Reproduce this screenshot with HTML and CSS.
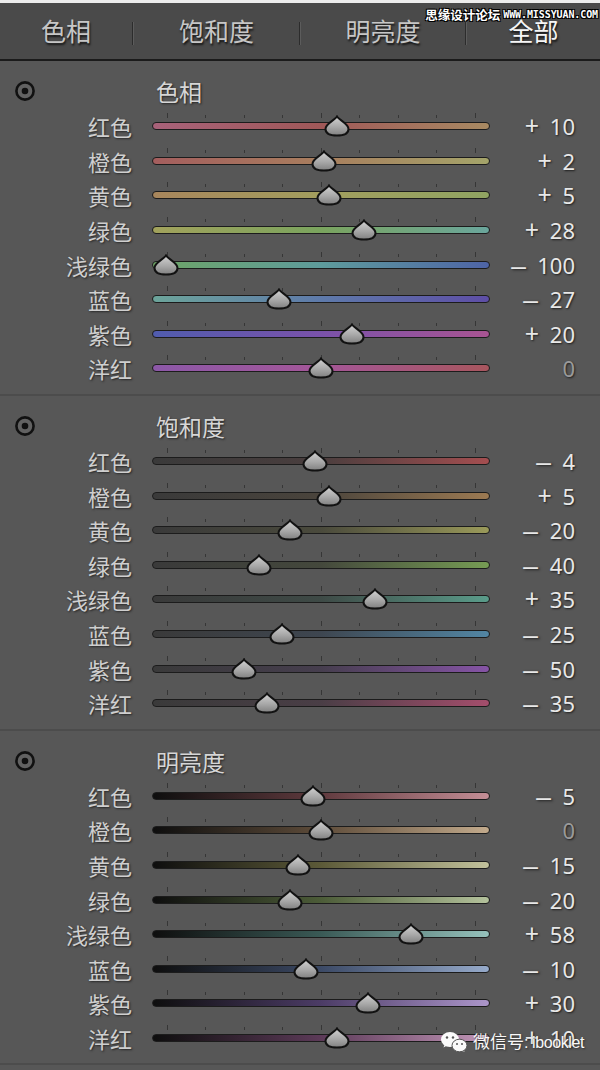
FILE: index.html
```html
<!DOCTYPE html>
<html>
<head>
<meta charset="utf-8">
<link rel="stylesheet" href="styles.css">
</head>
<body>
<svg class="defs" width="0" height="0">
  <defs>
    <linearGradient id="tg" x1="0" y1="0" x2="0" y2="1">
      <stop offset="0" stop-color="#d2d2d2"/>
      <stop offset="0.55" stop-color="#a8a8a8"/>
      <stop offset="1" stop-color="#808080"/>
    </linearGradient>
    <symbol id="thumb" viewBox="0 0 26 22">
      <path d="M13 1.5 C15 5 24.5 8.5 24.5 14 C24.5 18.5 20 20.5 13 20.5 C6 20.5 1.5 18.5 1.5 14 C1.5 8.5 11 5 13 1.5 Z" fill="url(#tg)" stroke="#121212" stroke-width="2"/>
    </symbol>
    <symbol id="eye" viewBox="0 0 22 22">
      <circle cx="11" cy="11" r="8.6" fill="#626262" stroke="#111" stroke-width="2.6"/>
      <circle cx="11" cy="11" r="3.3" fill="#111"/>
    </symbol>
  </defs>
</svg>
<div class="page">
  <div class="topstrip"></div>
  <div class="header">
    <div class="tab t1">色相</div>
    <div class="sep"></div>
    <div class="tab t2">饱和度</div>
    <div class="sep"></div>
    <div class="tab t3">明亮度</div>
    <div class="sep"></div>
    <div class="tab t4 active">全部</div>
  </div>

  <div class="section">
    <div class="row title-row">
      <div class="eye"><svg width="22" height="22"><use href="#eye"/></svg></div>
      <div class="title">色相</div>
    </div>
    <div class="row"><div class="label">红色</div><div class="track"><div class="bar h-red"></div><div class="ticks"><i class="big"></i><i></i><i></i><i></i><i class="big"></i><i></i><i></i><i></i><i class="big"></i></div><svg class="thumb" style="left:184.5px" width="26" height="22"><use href="#thumb"/></svg></div><div class="value"><span class="plus">+</span> 10</div></div>
    <div class="row"><div class="label">橙色</div><div class="track"><div class="bar h-orange"></div><div class="ticks"><i class="big"></i><i></i><i></i><i></i><i class="big"></i><i></i><i></i><i></i><i class="big"></i></div><svg class="thumb" style="left:172.1px" width="26" height="22"><use href="#thumb"/></svg></div><div class="value"><span class="plus">+</span> 2</div></div>
    <div class="row"><div class="label">黄色</div><div class="track"><div class="bar h-yellow"></div><div class="ticks"><i class="big"></i><i></i><i></i><i></i><i class="big"></i><i></i><i></i><i></i><i class="big"></i></div><svg class="thumb" style="left:176.75px" width="26" height="22"><use href="#thumb"/></svg></div><div class="value"><span class="plus">+</span> 5</div></div>
    <div class="row"><div class="label">绿色</div><div class="track"><div class="bar h-green"></div><div class="ticks"><i class="big"></i><i></i><i></i><i></i><i class="big"></i><i></i><i></i><i></i><i class="big"></i></div><svg class="thumb" style="left:212.4px" width="26" height="22"><use href="#thumb"/></svg></div><div class="value"><span class="plus">+</span> 28</div></div>
    <div class="row"><div class="label">浅绿色</div><div class="track"><div class="bar h-aqua"></div><div class="ticks"><i class="big"></i><i></i><i></i><i></i><i class="big"></i><i></i><i></i><i></i><i class="big"></i></div><svg class="thumb" style="left:14px" width="26" height="22"><use href="#thumb"/></svg></div><div class="value"><span class="minus">–</span> 100</div></div>
    <div class="row"><div class="label">蓝色</div><div class="track"><div class="bar h-blue"></div><div class="ticks"><i class="big"></i><i></i><i></i><i></i><i class="big"></i><i></i><i></i><i></i><i class="big"></i></div><svg class="thumb" style="left:127.15px" width="26" height="22"><use href="#thumb"/></svg></div><div class="value"><span class="minus">–</span> 27</div></div>
    <div class="row"><div class="label">紫色</div><div class="track"><div class="bar h-purple"></div><div class="ticks"><i class="big"></i><i></i><i></i><i></i><i class="big"></i><i></i><i></i><i></i><i class="big"></i></div><svg class="thumb" style="left:200px" width="26" height="22"><use href="#thumb"/></svg></div><div class="value"><span class="plus">+</span> 20</div></div>
    <div class="row"><div class="label">洋红</div><div class="track"><div class="bar h-magenta"></div><div class="ticks"><i class="big"></i><i></i><i></i><i></i><i class="big"></i><i></i><i></i><i></i><i class="big"></i></div><svg class="thumb" style="left:169px" width="26" height="22"><use href="#thumb"/></svg></div><div class="value zero">0</div></div>
  </div>

  <div class="section">
    <div class="row title-row">
      <div class="eye"><svg width="22" height="22"><use href="#eye"/></svg></div>
      <div class="title">饱和度</div>
    </div>
    <div class="row"><div class="label">红色</div><div class="track"><div class="bar s-red"></div><div class="ticks"><i class="big"></i><i></i><i></i><i></i><i class="big"></i><i></i><i></i><i></i><i class="big"></i></div><svg class="thumb" style="left:162.8px" width="26" height="22"><use href="#thumb"/></svg></div><div class="value"><span class="minus">–</span> 4</div></div>
    <div class="row"><div class="label">橙色</div><div class="track"><div class="bar s-orange"></div><div class="ticks"><i class="big"></i><i></i><i></i><i></i><i class="big"></i><i></i><i></i><i></i><i class="big"></i></div><svg class="thumb" style="left:176.75px" width="26" height="22"><use href="#thumb"/></svg></div><div class="value"><span class="plus">+</span> 5</div></div>
    <div class="row"><div class="label">黄色</div><div class="track"><div class="bar s-yellow"></div><div class="ticks"><i class="big"></i><i></i><i></i><i></i><i class="big"></i><i></i><i></i><i></i><i class="big"></i></div><svg class="thumb" style="left:138px" width="26" height="22"><use href="#thumb"/></svg></div><div class="value"><span class="minus">–</span> 20</div></div>
    <div class="row"><div class="label">绿色</div><div class="track"><div class="bar s-green"></div><div class="ticks"><i class="big"></i><i></i><i></i><i></i><i class="big"></i><i></i><i></i><i></i><i class="big"></i></div><svg class="thumb" style="left:107px" width="26" height="22"><use href="#thumb"/></svg></div><div class="value"><span class="minus">–</span> 40</div></div>
    <div class="row"><div class="label">浅绿色</div><div class="track"><div class="bar s-aqua"></div><div class="ticks"><i class="big"></i><i></i><i></i><i></i><i class="big"></i><i></i><i></i><i></i><i class="big"></i></div><svg class="thumb" style="left:223.25px" width="26" height="22"><use href="#thumb"/></svg></div><div class="value"><span class="plus">+</span> 35</div></div>
    <div class="row"><div class="label">蓝色</div><div class="track"><div class="bar s-blue"></div><div class="ticks"><i class="big"></i><i></i><i></i><i></i><i class="big"></i><i></i><i></i><i></i><i class="big"></i></div><svg class="thumb" style="left:130.25px" width="26" height="22"><use href="#thumb"/></svg></div><div class="value"><span class="minus">–</span> 25</div></div>
    <div class="row"><div class="label">紫色</div><div class="track"><div class="bar s-purple"></div><div class="ticks"><i class="big"></i><i></i><i></i><i></i><i class="big"></i><i></i><i></i><i></i><i class="big"></i></div><svg class="thumb" style="left:91.5px" width="26" height="22"><use href="#thumb"/></svg></div><div class="value"><span class="minus">–</span> 50</div></div>
    <div class="row"><div class="label">洋红</div><div class="track"><div class="bar s-magenta"></div><div class="ticks"><i class="big"></i><i></i><i></i><i></i><i class="big"></i><i></i><i></i><i></i><i class="big"></i></div><svg class="thumb" style="left:114.75px" width="26" height="22"><use href="#thumb"/></svg></div><div class="value"><span class="minus">–</span> 35</div></div>
  </div>

  <div class="section">
    <div class="row title-row">
      <div class="eye"><svg width="22" height="22"><use href="#eye"/></svg></div>
      <div class="title">明亮度</div>
    </div>
    <div class="row"><div class="label">红色</div><div class="track"><div class="bar l-red"></div><div class="ticks"><i class="big"></i><i></i><i></i><i></i><i class="big"></i><i></i><i></i><i></i><i class="big"></i></div><svg class="thumb" style="left:161.25px" width="26" height="22"><use href="#thumb"/></svg></div><div class="value"><span class="minus">–</span> 5</div></div>
    <div class="row"><div class="label">橙色</div><div class="track"><div class="bar l-orange"></div><div class="ticks"><i class="big"></i><i></i><i></i><i></i><i class="big"></i><i></i><i></i><i></i><i class="big"></i></div><svg class="thumb" style="left:169px" width="26" height="22"><use href="#thumb"/></svg></div><div class="value zero">0</div></div>
    <div class="row"><div class="label">黄色</div><div class="track"><div class="bar l-yellow"></div><div class="ticks"><i class="big"></i><i></i><i></i><i></i><i class="big"></i><i></i><i></i><i></i><i class="big"></i></div><svg class="thumb" style="left:145.75px" width="26" height="22"><use href="#thumb"/></svg></div><div class="value"><span class="minus">–</span> 15</div></div>
    <div class="row"><div class="label">绿色</div><div class="track"><div class="bar l-green"></div><div class="ticks"><i class="big"></i><i></i><i></i><i></i><i class="big"></i><i></i><i></i><i></i><i class="big"></i></div><svg class="thumb" style="left:138px" width="26" height="22"><use href="#thumb"/></svg></div><div class="value"><span class="minus">–</span> 20</div></div>
    <div class="row"><div class="label">浅绿色</div><div class="track"><div class="bar l-aqua"></div><div class="ticks"><i class="big"></i><i></i><i></i><i></i><i class="big"></i><i></i><i></i><i></i><i class="big"></i></div><svg class="thumb" style="left:258.9px" width="26" height="22"><use href="#thumb"/></svg></div><div class="value"><span class="plus">+</span> 58</div></div>
    <div class="row"><div class="label">蓝色</div><div class="track"><div class="bar l-blue"></div><div class="ticks"><i class="big"></i><i></i><i></i><i></i><i class="big"></i><i></i><i></i><i></i><i class="big"></i></div><svg class="thumb" style="left:153.5px" width="26" height="22"><use href="#thumb"/></svg></div><div class="value"><span class="minus">–</span> 10</div></div>
    <div class="row"><div class="label">紫色</div><div class="track"><div class="bar l-purple"></div><div class="ticks"><i class="big"></i><i></i><i></i><i></i><i class="big"></i><i></i><i></i><i></i><i class="big"></i></div><svg class="thumb" style="left:215.5px" width="26" height="22"><use href="#thumb"/></svg></div><div class="value"><span class="plus">+</span> 30</div></div>
    <div class="row"><div class="label">洋红</div><div class="track"><div class="bar l-magenta"></div><div class="ticks"><i class="big"></i><i></i><i></i><i></i><i class="big"></i><i></i><i></i><i></i><i class="big"></i></div><svg class="thumb" style="left:184.5px" width="26" height="22"><use href="#thumb"/></svg></div><div class="value"><span class="plus">+</span> 10</div></div>
  </div>

  <div class="wm-top"><span class="wm-cn">思缘设计论坛</span><span class="wm-en">WWW.MISSYUAN.COM</span></div>
  <div class="wm-bottom">
    <svg class="wechat" width="28" height="22" viewBox="0 0 28 22">
      <path d="M3.5 16.5 L5 12.5 L8 14 Z" fill="#fafafa"/>
      <ellipse cx="10" cy="8.5" rx="9" ry="7.5" fill="#fafafa"/>
      <circle cx="7" cy="6.5" r="1.2" fill="#555"/>
      <circle cx="13" cy="6.5" r="1.2" fill="#555"/>
      <path d="M24.5 21 L23.5 17.5 L21 19 Z" fill="#fafafa"/>
      <ellipse cx="19.5" cy="14.5" rx="7.5" ry="6.3" fill="#fafafa" stroke="#555" stroke-width="1"/>
      <circle cx="17" cy="13" r="1" fill="#555"/>
      <circle cx="22" cy="13" r="1" fill="#555"/>
    </svg>
    <span class="wm-text"><span class="wm-cn2">微信号</span><span class="wm-lat">: ibooklet</span></span>
  </div>
</div>
</body>
</html>
```

FILE: styles.css
```css
html, body {
  margin: 0;
  padding: 0;
}
body {
  background: #575757;
  font-family: "Noto Sans CJK SC", "Noto Sans", sans-serif;
  width: 600px;
  height: 1070px;
  overflow: hidden;
}
.defs {
  display: block;
  width: 0;
  height: 0;
  overflow: hidden;
}
.page {
  position: relative;
  width: 600px;
  height: 1070px;
  background: #575757;
}
.topstrip {
  height: 3px;
  background: #ededed;
}
.header {
  height: 56px;
  background: #4a4a4a;
  border-bottom: 2px solid #1b1b1b;
  display: flex;
  align-items: center;
}
.tab {
  text-align: center;
  font-size: 25px;
  line-height: 30px;
  color: #c6c6c6;
  text-shadow: 1px 2px 2px #151515;
  margin-top: -2px;
}
.t1 { width: 132px; }
.t2 { width: 165px; }
.t3 { width: 164px; }
.t4 { width: 133px; }
.tab.active {
  color: #f6f6f6;
}
.sep {
  width: 1px;
  height: 23px;
  background: #2c2c2c;
  border-right: 1px solid #5c5c5c;
  margin-top: 4px;
}
.section {
  padding: 12px 0 8px;
  border-bottom: 2px solid #4c4c4c;
}
.row {
  display: grid;
  grid-template-columns: 152px 338px 85px;
  height: 34.6px;
  align-items: center;
}
.title-row {
  height: 36px;
}
.eye {
  padding-left: 14px;
  height: 22px;
}
.eye svg {
  display: block;
}
.title {
  font-size: 23px;
  line-height: 30px;
  color: #d6d6d6;
  padding-left: 4px;
  text-shadow: 1px 1px 2px #222;
}
.label {
  text-align: right;
  padding-right: 20px;
  font-size: 22px;
  line-height: 30px;
  color: #cfcfcf;
  text-shadow: 1px 1px 2px #262626;
}
.track {
  position: relative;
  height: 100%;
  display: flex;
  align-items: center;
}
.bar {
  width: 100%;
  box-sizing: border-box;
  height: 8px;
  border: 1.5px solid #1c1c1c;
  border-radius: 5px;
}
.ticks {
  position: absolute;
  left: 14.5px;
  right: 14.5px;
  top: calc(50% - 13px);
  height: 5px;
  display: flex;
  justify-content: space-between;
  align-items: flex-end;
}
.ticks i {
  display: block;
  width: 1px;
  height: 3px;
  background: #363636;
}
.ticks i.big {
  height: 5px;
}
.thumb {
  position: absolute;
  top: calc(50% - 11px);
  margin-left: -13px;
  display: block;
}
.value {
  text-align: right;
  font-family: "Noto Sans", "Noto Sans CJK SC", sans-serif;
  font-size: 22px;
  line-height: 30px;
  color: #e8e8e8;
  word-spacing: 5px;
  text-shadow: 1px 1px 2px #1e1e1e;
}
.value .plus {
  font-size: 25px;
  line-height: 22px;
}
.value .minus {
  display: inline-block;
  transform: scaleX(1.6);
  margin: 0 3px;
}
.value.zero {
  color: #9a9a9a;
}

/* hue tracks */
.h-red { background: linear-gradient(90deg, #a8627a, #a05858 50%, #a88a62); }
.h-orange { background: linear-gradient(90deg, #a45e5e, #a87e5e 50%, #a4a46a); }
.h-yellow { background: linear-gradient(90deg, #a8865c, #a29e5e 50%, #90a462); }
.h-green { background: linear-gradient(90deg, #a2a25c, #7aa45e 50%, #6aa69c); }
.h-aqua { background: linear-gradient(90deg, #6ea466, #5e9c9c 50%, #4e64a6); }
.h-blue { background: linear-gradient(90deg, #6ca49a, #5e7aaa 50%, #5e4ea6); }
.h-purple { background: linear-gradient(90deg, #505cae, #7a52aa 50%, #a85492); }
.h-magenta { background: linear-gradient(90deg, #8c58a8, #a45698 50%, #a8565e); }

/* saturation tracks */
.s-red { background: linear-gradient(90deg, #3a3a3a, #4a3e3e 50%, #a44e50); }
.s-orange { background: linear-gradient(90deg, #3a3a3a, #4a443c 50%, #9c7a52); }
.s-yellow { background: linear-gradient(90deg, #3a3a3a, #4a4a3c 50%, #9a9a5a); }
.s-green { background: linear-gradient(90deg, #3a3a3a, #44483c 50%, #769c54); }
.s-aqua { background: linear-gradient(90deg, #3a3a3a, #3e4a46 50%, #5a9c8a); }
.s-blue { background: linear-gradient(90deg, #3a3a3a, #3e4650 50%, #5286a4); }
.s-purple { background: linear-gradient(90deg, #3a3a3a, #463e4e 50%, #8654a6); }
.s-magenta { background: linear-gradient(90deg, #3a3a3a, #4a3e46 50%, #a44e6c); }

/* luminance tracks */
.l-red { background: linear-gradient(90deg, #0e0e0e, #603a3e 50%, #c48e96); }
.l-orange { background: linear-gradient(90deg, #0e0e0e, #5e4c3a 50%, #c2aa8c); }
.l-yellow { background: linear-gradient(90deg, #0e0e0e, #5c5a38 50%, #c2c29c); }
.l-green { background: linear-gradient(90deg, #0e0e0e, #4c5c38 50%, #b4c29c); }
.l-aqua { background: linear-gradient(90deg, #0e0e0e, #3a5a56 50%, #96c2bc); }
.l-blue { background: linear-gradient(90deg, #0e0e0e, #3c4a66 50%, #96aaca); }
.l-purple { background: linear-gradient(90deg, #0e0e0e, #4c3c66 50%, #ac96ca); }
.l-magenta { background: linear-gradient(90deg, #0e0e0e, #5c3a58 50%, #c296b8); }

/* watermarks (overlay) */
.wm-top {
  position: absolute;
  top: 7px;
  right: 2px;
  display: flex;
  align-items: center;
  gap: 3px;
  color: #ffffff;
  text-shadow: 0 0 1px #000, 1px 1px 0 #000, -1px -1px 0 #000, 1px -1px 0 #000, -1px 1px 0 #000;
}
.wm-cn {
  font-size: 12.5px;
  line-height: 16px;
  font-weight: bold;
}
.wm-en {
  font-family: "DejaVu Sans Mono", monospace;
  font-size: 10px;
  line-height: 16px;
  font-weight: bold;
  letter-spacing: -0.1px;
}
.wm-bottom {
  position: absolute;
  left: 440px;
  top: 1030px;
  display: flex;
  align-items: center;
  gap: 5px;
}
.wechat {
  display: block;
}
.wm-text {
  line-height: 22px;
  color: #f8f8f8;
  text-shadow: 1px 1px 2px #333;
  white-space: nowrap;
}
.wm-cn2 {
  font-size: 17px;
}
.wm-lat {
  font-family: "Liberation Sans", sans-serif;
  font-size: 16px;
  letter-spacing: -0.4px;
}
```
